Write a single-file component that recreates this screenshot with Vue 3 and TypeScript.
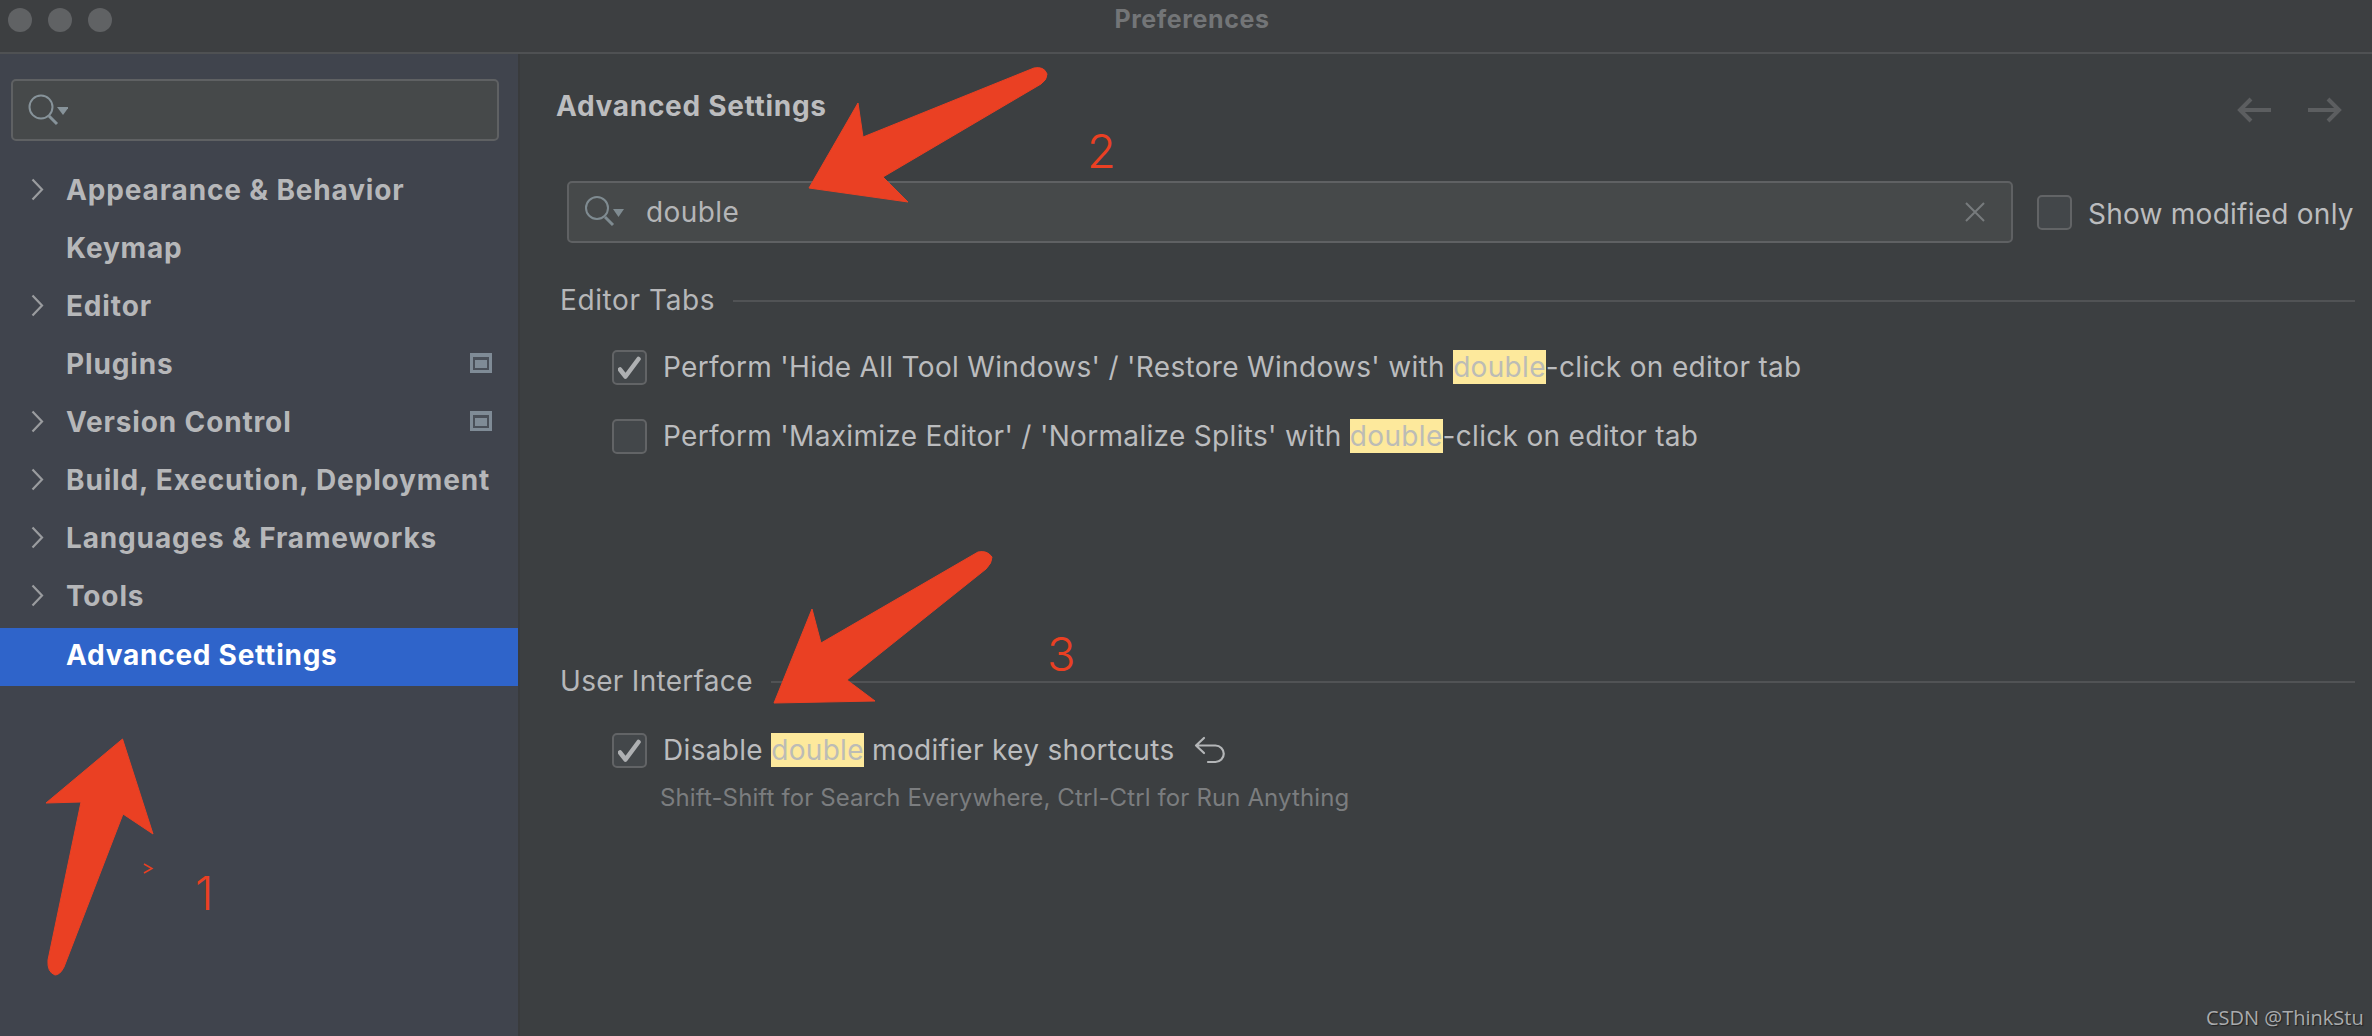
<script setup lang="ts">
interface MenuItem { label: string; chevron: boolean; badge: boolean; active: boolean }
const menu: MenuItem[] = [
  { label: 'Appearance & Behavior', chevron: true, badge: false, active: false },
  { label: 'Keymap', chevron: false, badge: false, active: false },
  { label: 'Editor', chevron: true, badge: false, active: false },
  { label: 'Plugins', chevron: false, badge: true, active: false },
  { label: 'Version Control', chevron: true, badge: true, active: false },
  { label: 'Build, Execution, Deployment', chevron: true, badge: false, active: false },
  { label: 'Languages & Frameworks', chevron: true, badge: false, active: false },
  { label: 'Tools', chevron: true, badge: false, active: false },
  { label: 'Advanced Settings', chevron: false, badge: false, active: true },
]
</script>

<template>
  <div class="window">
    <header class="titlebar">
      <div class="lights"><i></i><i></i><i></i></div>
      <div class="title">Preferences</div>
    </header>
    <div class="body">
      <aside class="sidebar">
        <div class="side-search">
          <svg class="search-icon" width="40" height="34" viewBox="0 0 40 34">
            <circle cx="13" cy="14" r="11.5" fill="none" stroke="#87939a" stroke-width="2" />
            <path d="M21 23l8 8" stroke="#87939a" stroke-width="3" fill="none" />
            <path d="M29 14h12l-6 8z" fill="#87939a" />
          </svg>
        </div>
        <nav class="menu">
          <div v-for="item in menu" :key="item.label" class="menu-row" :class="{ active: item.active }">
            <svg v-if="item.chevron" class="chevron" width="13" height="23" viewBox="0 0 13 23">
              <path d="M1.5 1.5L11 11.5L1.500 21.5" fill="none" stroke="#9a9c9f" stroke-width="2.2" />
            </svg>
            <span class="menu-label">{{ item.label }}</span>
            <span v-if="item.badge" class="badge"><b><u></u></b></span>
          </div>
        </nav>
      </aside>
      <main class="content">
        <div class="head">
          <h1>Advanced Settings</h1>
          <div class="nav-arrows">
            <svg width="34" height="26" viewBox="0 0 34 26"><path d="M34 13H3M14 2L3 13l11 11" fill="none" stroke="#5c5e60" stroke-width="4" /></svg>
            <svg width="34" height="26" viewBox="0 0 34 26"><path d="M0 13h31M20 2l11 11L20 24" fill="none" stroke="#5c5e60" stroke-width="4" /></svg>
          </div>
        </div>
        <div class="filter-row">
          <div class="main-search">
            <svg class="search-icon" width="40" height="34" viewBox="0 0 40 34">
              <circle cx="13" cy="13" r="11" fill="none" stroke="#7f8b91" stroke-width="2" />
              <path d="M21 22l8 8" stroke="#7f8b91" stroke-width="3" fill="none" />
              <path d="M29 14h11l-5.500 8z" fill="#7f8b91" />
            </svg>
            <span class="query">double</span>
            <svg class="clear" width="20" height="20" viewBox="0 0 20 20"><path d="M1 1l18 18M19 1L1 19" stroke="#777b7d" stroke-width="2" fill="none" /></svg>
          </div>
          <span class="box"></span>
          <span class="show-label">Show modified only</span>
        </div>

        <div class="section first"><span>Editor Tabs</span><i></i></div>
        <div class="option">
          <span class="box checked">
            <svg width="24" height="24" viewBox="0 0 24 24"><path d="M2 13.500l5.500 7L20.500 3" fill="none" stroke="#aeb0b2" stroke-width="4.500" stroke-linecap="round" stroke-linejoin="round" /></svg>
          </span>
          <span class="opt-text">Perform 'Hide All Tool Windows' / 'Restore Windows' with <mark>double</mark>-click on editor tab</span>
        </div>
        <div class="option second">
          <span class="box"></span>
          <span class="opt-text">Perform 'Maximize Editor' / 'Normalize Splits' with <mark>double</mark>-click on editor tab</span>
        </div>

        <div class="section third"><span>User Interface</span><i></i></div>
        <div class="option ui">
          <span class="box checked">
            <svg width="24" height="24" viewBox="0 0 24 24"><path d="M2 13.500l5.500 7L20.500 3" fill="none" stroke="#aeb0b2" stroke-width="4.500" stroke-linecap="round" stroke-linejoin="round" /></svg>
          </span>
          <span class="opt-text">Disable <mark>double</mark> modifier key shortcuts</span>
          <svg class="undo" width="32" height="30" viewBox="0 0 32 30">
            <path d="M11 3L3 10.500l8 7.500M3 10.500H22.500a8.250 8.250 0 0 1 0 16.500H15" fill="none" stroke="#b4b6b8" stroke-width="2.200" stroke-linecap="round" stroke-linejoin="round" />
          </svg>
        </div>
        <div class="hint">Shift-Shift for Search Everywhere, Ctrl-Ctrl for Run Anything</div>
      </main>
    </div>

    <svg class="annot" width="2372" height="1036" viewBox="0 0 2372 1036">
      <g fill="#ea4023" stroke="#ea4023" stroke-linejoin="round" stroke-width="1">
        <path d="M122.500 739L153 834L123 814L64 967Q60 975 55 975Q47 972 48 960L81 802L46 803Z" />
        <path d="M809 188L858 103L863 137L1034 68Q1044 66 1047 74Q1047 80 1041 84L883 177L908 202Z" />
        <path d="M774 703L812 609L821 643L978 552Q987 550 992 557Q992 563 986 569L847 680L875 701Z" />
      </g>
      <path d="M144 864l8 4.500-8 4.500" fill="none" stroke="#ea4023" stroke-width="1.500" />
    </svg>
    <span class="num n1">1</span>
    <span class="num n2">2</span>
    <span class="num n3">3</span>
    <span class="watermark">CSDN @ThinkStu</span>
  </div>
</template>

<style>
html, body { margin: 0; background: #3c3f41; }
</style>

<style scoped>
.window {
  position: relative;
  width: 2372px;
  height: 1036px;
  overflow: hidden;
  display: flex;
  flex-direction: column;
  background: #3c3f41;
  color: #bbbcbe;
  font-family: Inter, "Liberation Sans", sans-serif;
}
.titlebar {
  flex: none;
  height: 52px;
  border-bottom: 2px solid #4f5153;
  display: flex;
  align-items: center;
  position: relative;
  background: #3d3f41;
}
.lights { display: flex; gap: 16px; padding-left: 8px; margin-top: -12px; }
.lights i { width: 24px; height: 24px; border-radius: 50%; background: #606264; }
.title {
  position: absolute;
  left: 12px;
  right: 0;
  top: 5px;
  text-align: center;
  font-size: 25px;
  font-weight: 700;
  line-height: 28px;
  letter-spacing: 0.6px;
  color: #737577;
}
.body { flex: 1; display: flex; min-height: 0; }
.sidebar {
  flex: none;
  width: 518px;
  background: #40444d;
  border-right: 2px solid #393b3d;
  padding-top: 25px;
}
.side-search {
  margin-left: 11px;
  width: 488px;
  height: 62px;
  box-sizing: border-box;
  background: #46494a;
  border: 2px solid #5f6163;
  border-radius: 5px;
  display: flex;
  align-items: center;
  padding-left: 15px;
}
.menu { margin-top: 23px; }
.menu-row {
  position: relative;
  height: 58px;
  display: flex;
  align-items: center;
  padding-left: 66px;
  padding-bottom: 6px;
  box-sizing: border-box;
  font-size: 28px;
  font-weight: 700;
  letter-spacing: 0.85px;
  white-space: nowrap;
  color: #b6b7b9;
}
.menu-row.active { background: #2f64ca; color: #fff; padding-bottom: 5px; letter-spacing: 0.75px; }
.chevron { position: absolute; left: 31px; top: 14px; }
.badge {
  position: absolute;
  left: 470px;
  top: 15px;
  width: 22px;
  height: 20px;
  box-sizing: border-box;
  background: #7f8b96;
  padding: 4px 3px 3px;
  display: flex;
}
.badge b { flex: 1; background: #4a5059; padding: 3px 2px 2px; display: flex; }
.badge u { flex: 1; background: #7f8b96; }
.content { flex: 1; min-width: 0; }
.head {
  height: 104px;
  display: flex;
  align-items: center;
  justify-content: space-between;
  padding: 0 30px 0 36px;
}
h1 { margin: 0; font-size: 28px; line-height: 34px; font-weight: 700; letter-spacing: 0.7px; color: #bcbdbf; }
.nav-arrows { display: flex; gap: 37px; margin-top: 8px; }
.filter-row { display: flex; align-items: center; margin: 23px 0 0 47px; height: 62px; }
.main-search {
  width: 1446px;
  height: 62px;
  box-sizing: border-box;
  flex: none;
  background: #46494a;
  border: 2px solid #5f6163;
  border-radius: 5px;
  display: flex;
  align-items: center;
  padding: 0 26px 0 15px;
}
.search-icon { flex: none; }
.query { margin-left: 22px; font-size: 28px; line-height: 34px; letter-spacing: 0.4px; color: #b4b5b7; flex: 1; }
.box {
  flex: none;
  width: 35px;
  height: 35px;
  box-sizing: border-box;
  background: #43474a;
  border: 2px solid #626466;
  border-radius: 5px;
  display: inline-flex;
  align-items: center;
  justify-content: center;
}
.filter-row .box { margin-left: 24px; margin-top: 1px; }
.show-label { margin-left: 16px; font-size: 28px; line-height: 34px; letter-spacing: 0.25px; white-space: nowrap; margin-top: 3px; }
.section { display: flex; align-items: center; margin-left: 40px; font-size: 28px; line-height: 34px; letter-spacing: 0.6px; color: #b6b7b9; padding-right: 17px; }
.section i { flex: 1; height: 2px; background: #515355; margin-left: 18px; margin-top: 2px; }
.section.first { margin-top: 40px; }
.section.third { margin-top: 210px; letter-spacing: 0.3px; }
.option { display: flex; align-items: center; margin-left: 92px; height: 35px; margin-top: 33px; }
.option.second { margin-top: 34px; }
.option.ui { margin-top: 35px; }
.opt-text { margin-left: 16px; font-size: 28px; line-height: 35px; letter-spacing: 0.32px; white-space: nowrap; }
mark { background: #fde99c; color: #bcbcb6; }
.undo { margin-left: 18px; margin-top: -2px; }
.hint { margin: 15px 0 0 140px; font-size: 24px; line-height: 30px; letter-spacing: 0.12px; color: #7b7d7f; }
.annot { position: absolute; left: 0; top: 0; pointer-events: none; }
.num { position: absolute; font-weight: 300; font-size: 47px; line-height: 48px; color: #ea4023; }
.n1 { left: 195px; top: 869px; }
.n2 { left: 1087px; top: 127px; }
.n3 { left: 1047px; top: 630px; }
.watermark {
  position: absolute;
  left: 2206px;
  top: 1004px;
  font-family: "Open Sans", sans-serif;
  font-size: 20px;
  line-height: 28px;
  color: #a9abad;
  text-shadow: 1px 1px 1px #222;
}
</style>
